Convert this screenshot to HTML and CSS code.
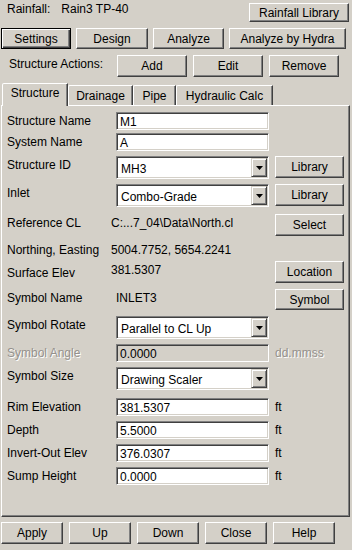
FILE: index.html
```html
<!DOCTYPE html>
<html>

<head>
  <title>Structure</title>
  <meta charset="utf-8">
  <link rel="stylesheet" href="styles.css">
</head>

<body>
  <div class="top-row">
    <span class="rain-label">Rainfall:</span>
    <span class="rain-value">Rain3 TP-40</span>
    <button class="btn btn-rainlib">Rainfall Library</button>
  </div>

  <div class="mode-row">
    <button class="btn btn-default btn-settings">Settings</button>
    <button class="btn btn-design">Design</button>
    <button class="btn btn-analyze">Analyze</button>
    <button class="btn btn-hydra">Analyze by Hydra</button>
  </div>

  <div class="actions-row">
    <span class="actions-label">Structure Actions:</span>
    <button class="btn btn-action">Add</button>
    <button class="btn btn-action">Edit</button>
    <button class="btn btn-action">Remove</button>
  </div>

  <div class="tabs">
    <div class="tab tab-structure active">Structure</div>
    <div class="tab tab-drainage">Drainage</div>
    <div class="tab tab-pipe">Pipe</div>
    <div class="tab tab-hydraulic">Hydraulic Calc</div>
  </div>

  <div class="panel">
    <div class="row mb-3">
      <span class="label">Structure Name</span>
      <div class="text-field">M1</div>
    </div>
    <div class="row mb-5">
      <span class="label">System Name</span>
      <div class="text-field">A</div>
    </div>
    <div class="row mb-5">
      <span class="label">Structure ID</span>
      <div class="combo">
        <span class="combo-text">MH3</span>
        <span class="combo-arrow"><svg width="7" height="4" viewBox="0 0 7 4"><polygon points="0,0 7,0 3.5,4" fill="#000"/></svg></span>
      </div>
      <button class="btn btn-side">Library</button>
    </div>
    <div class="row mb-7">
      <span class="label">Inlet</span>
      <div class="combo">
        <span class="combo-text">Combo-Grade</span>
        <span class="combo-arrow"><svg width="7" height="4" viewBox="0 0 7 4"><polygon points="0,0 7,0 3.5,4" fill="#000"/></svg></span>
      </div>
      <button class="btn btn-side">Library</button>
    </div>
    <div class="row mb-5">
      <span class="label">Reference CL</span>
      <span class="value value-shift">C:...7_04\Data\North.cl</span>
      <button class="btn btn-side">Select</button>
    </div>
    <div class="row mb-4">
      <span class="label">Northing, Easting</span>
      <span class="value value-shift">5004.7752, 5654.2241</span>
    </div>
    <div class="row mb-6">
      <span class="label label-low">Surface Elev</span>
      <span class="value value-shift label-low">381.5307</span>
      <button class="btn btn-side">Location</button>
    </div>
    <div class="row mb-6">
      <span class="label">Symbol Name</span>
      <span class="value">INLET3</span>
      <button class="btn btn-side btn-short">Symbol</button>
    </div>
    <div class="row mb-5">
      <span class="label">Symbol Rotate</span>
      <div class="combo">
        <span class="combo-text">Parallel to CL Up</span>
        <span class="combo-arrow"><svg width="7" height="4" viewBox="0 0 7 4"><polygon points="0,0 7,0 3.5,4" fill="#000"/></svg></span>
      </div>
    </div>
    <div class="row mb-5">
      <span class="label disabled">Symbol Angle</span>
      <div class="text-field field-disabled">0.0000</div>
      <span class="unit disabled">dd.mmss</span>
    </div>
    <div class="row mb-8">
      <span class="label">Symbol Size</span>
      <div class="combo">
        <span class="combo-text">Drawing Scaler</span>
        <span class="combo-arrow"><svg width="7" height="4" viewBox="0 0 7 4"><polygon points="0,0 7,0 3.5,4" fill="#000"/></svg></span>
      </div>
    </div>
    <div class="row mb-5">
      <span class="label">Rim Elevation</span>
      <div class="text-field">381.5307</div>
      <span class="unit">ft</span>
    </div>
    <div class="row mb-5">
      <span class="label">Depth</span>
      <div class="text-field">5.5000</div>
      <span class="unit">ft</span>
    </div>
    <div class="row mb-5">
      <span class="label">Invert-Out Elev</span>
      <div class="text-field">376.0307</div>
      <span class="unit">ft</span>
    </div>
    <div class="row">
      <span class="label">Sump Height</span>
      <div class="text-field">0.0000</div>
      <span class="unit">ft</span>
    </div>
  </div>

  <div class="bottom-row">
    <button class="btn btn-bottom">Apply</button>
    <button class="btn btn-bottom">Up</button>
    <button class="btn btn-bottom">Down</button>
    <button class="btn btn-bottom">Close</button>
    <button class="btn btn-bottom">Help</button>
  </div>
</body>

</html>
```

FILE: styles.css
```css
body {
  margin: 0;
  width: 352px;
  height: 550px;
  overflow: hidden;
  background: #d4d0c8;
  font-family: "Liberation Sans", Arial, sans-serif;
  font-size: 12px;
  line-height: 14px;
  color: #000;
}

/* classic raised button */
.btn {
  box-sizing: border-box;
  height: 21px;
  padding: 0;
  margin: 0;
  font: inherit;
  color: #000;
  background: #d4d0c8;
  border: 1px solid;
  border-color: #fff #404040 #404040 #fff;
  box-shadow: inset -1px -1px #808080;
  text-align: center;
}

.btn-default {
  border-color: #000;
  box-shadow: inset 1px 1px #fff, inset -1px -1px #404040, inset -2px -2px #808080;
}

/* top rows */
.top-row {
  display: flex;
  height: 27px;
  padding-top: 3px;
  box-sizing: border-box;
}

.rain-label {
  margin-left: 7px;
  margin-top: -1px;
}

.rain-value {
  margin-left: 11px;
  margin-top: -1px;
}

.btn-rainlib {
  margin-left: auto;
  margin-right: 3px;
  width: 100px;
  height: 19px;
}

.mode-row {
  display: flex;
  height: 27px;
  padding: 1px 0 0 1px;
  box-sizing: border-box;
  gap: 5px;
}

.btn-settings { width: 70px; }
.btn-design { width: 72px; }
.btn-analyze { width: 71px; }
.btn-hydra { width: 117px; }

.actions-row {
  display: flex;
  height: 28px;
  padding-top: 1px;
  box-sizing: border-box;
  gap: 6px;
}

.actions-label {
  margin-left: 9px;
  width: 102px;
  padding-top: 2px;
}

.btn-action {
  width: 70px;
  height: 22px;
}

/* tabs */
.tabs {
  display: flex;
  align-items: flex-end;
  height: 23px;
  padding-left: 2px;
}

.tab {
  box-sizing: border-box;
  height: 20px;
  padding-top: 3px;
  text-align: center;
  border: 1px solid;
  border-bottom: none;
  border-color: #fff #404040 transparent #fff;
  box-shadow: inset -1px 0 #808080;
  border-top-left-radius: 2px;
}

.tab.active {
  height: 23px;
  margin-bottom: -1px;
  padding-top: 2px;
  background: #d4d0c8;
  position: relative;
}

.tab-structure { width: 66px; }
.tab-drainage { width: 65px; }
.tab-pipe { width: 43px; }
.tab-hydraulic { width: 97px; }

/* tab page */
.panel {
  box-sizing: border-box;
  margin-left: 1px;
  width: 349px;
  height: 412px;
  padding: 6px 0 0 5px;
  border: 1px solid;
  border-color: #fff #404040 #404040 #fff;
  box-shadow: inset -1px -1px #808080;
}

.row {
  display: flex;
  align-items: flex-start;
}

.mb-3 { margin-bottom: 3px; }
.mb-4 { margin-bottom: 4px; }
.mb-5 { margin-bottom: 5px; }
.mb-6 { margin-bottom: 6px; }
.mb-7 { margin-bottom: 7px; }
.mb-8 { margin-bottom: 8px; }

.label {
  width: 109px;
  flex-shrink: 0;
  padding-top: 2px;
  white-space: nowrap;
}

.label-low {
  padding-top: 5px;
}

.value {
  width: 153px;
  padding-top: 2px;
  white-space: nowrap;
}

.value-shift {
  margin-left: -5px;
  width: 158px;
}

.text-field {
  box-sizing: border-box;
  width: 153px;
  height: 18px;
  padding: 2px 0 0 3px;
  background: #fff;
  border: 1px solid;
  border-color: #808080 #fff #fff #808080;
  box-shadow: inset 1px 1px #404040, inset -1px -1px #d4d0c8;
  white-space: nowrap;
}

.field-disabled {
  background: #d4d0c8;
}

.disabled {
  color: #94918c;
  text-shadow: 1px 1px #fff;
}

.unit {
  margin-left: 6px;
  padding-top: 2px;
}

/* combo box */
.combo {
  box-sizing: border-box;
  display: flex;
  width: 153px;
  height: 23px;
  padding: 1px;
  background: #fff;
  border: 1px solid;
  border-color: #808080 #fff #fff #808080;
  box-shadow: inset 1px 1px #404040, inset -1px -1px #d4d0c8;
}

.combo-text {
  flex: 1;
  padding: 4px 0 0 3px;
  white-space: nowrap;
}

.combo-arrow {
  box-sizing: border-box;
  display: flex;
  align-items: center;
  justify-content: center;
  width: 16px;
  height: 19px;
  background: #d4d0c8;
  border: 1px solid;
  border-color: #d4d0c8 #404040 #404040 #d4d0c8;
  box-shadow: inset 1px 1px #fff, inset -1px -1px #808080;
}

.btn-side {
  margin-left: 6px;
  width: 69px;
  height: 22px;
}

.btn-short {
  height: 21px;
}

/* bottom buttons */
.bottom-row {
  display: flex;
  gap: 6px;
  padding: 5px 0 0 1px;
}

.btn-bottom {
  width: 62px;
  height: 22px;
}
```
